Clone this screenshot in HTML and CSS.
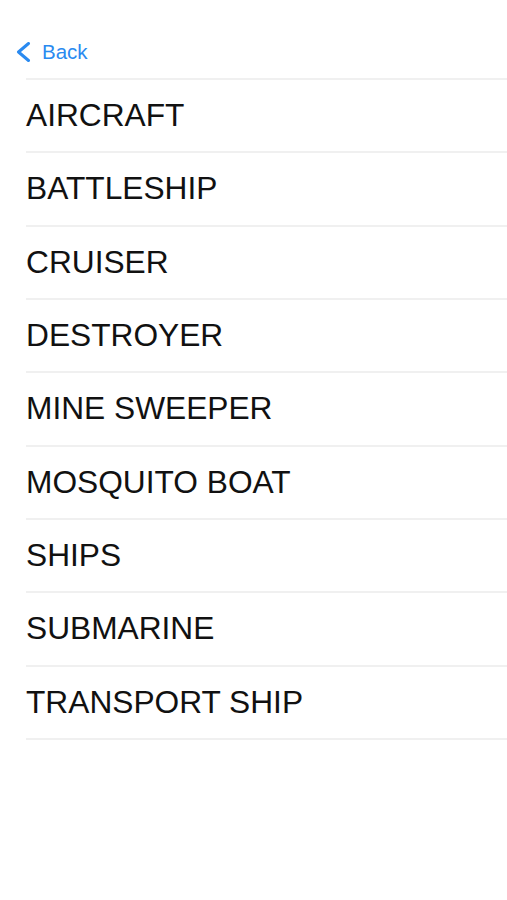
FILE: index.html
```html
<!DOCTYPE html>
<html lang="en">
<head>
  <meta charset="UTF-8" />
  <meta name="viewport" content="width=device-width, initial-scale=1.0"/>
  <title>Categories</title>
  <link rel="stylesheet" href="styles.css">
</head>
<body>

  <nav class="navbar">
    <a class="back" href="#">
      <svg class="chevron" width="16" height="20" viewBox="0 0 16 20">
        <path d="M13.5 1.5 L3.5 10 L13.5 18.5" fill="none" stroke="#2a8af0" stroke-width="3" stroke-linecap="round" stroke-linejoin="round"/>
      </svg>
      <span>Back</span>
    </a>
  </nav>

  <ul class="list">
    <li>AIRCRAFT</li>
    <li>BATTLESHIP</li>
    <li>CRUISER</li>
    <li>DESTROYER</li>
    <li>MINE SWEEPER</li>
    <li>MOSQUITO BOAT</li>
    <li>SHIPS</li>
    <li>SUBMARINE</li>
    <li>TRANSPORT SHIP</li>
  </ul>

</body>
</html>
```

FILE: styles.css
```css
body {
  margin: 0;
  font-family: 'Liberation Sans', Arial, sans-serif;
  background: #fff;
  color: #111;
}

.navbar {
  height: 78px;
  display: flex;
  align-items: flex-end;
  padding-left: 15px;
  box-sizing: border-box;
  padding-bottom: 14px;
}

.back {
  display: flex;
  align-items: center;
  gap: 11px;
  color: #2a8af0;
  text-decoration: none;
  font-size: 20.5px;
}

.chevron {
  display: block;
}

.list {
  list-style: none;
  margin: 0 0 0 26px;
  padding: 0;
  border-top: 2px solid #f0f0f0;
}

.list li {
  height: 71.33px;
  border-bottom: 2px solid #f0f0f0;
  display: flex;
  align-items: center;
  font-size: 31.7px;
  color: #111;
}
```
